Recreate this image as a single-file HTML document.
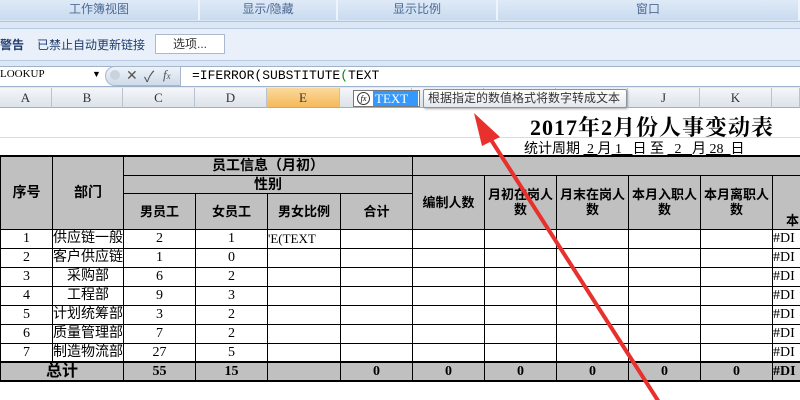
<!DOCTYPE html>
<html><head><meta charset="utf-8"><style>
*{margin:0;padding:0;box-sizing:border-box}
body{width:800px;height:400px;overflow:hidden;background:#fff;position:relative;font-family:"Liberation Sans","Noto Sans CJK SC",sans-serif;font-size:12px}
.a{position:absolute}
.tab{position:absolute;top:0;height:20px;background:linear-gradient(#dfeaf7,#c9dbf0);border-right:2px solid #eef4fb;color:#4d6a92;font-size:12px;text-align:center;line-height:18px}
.ch{position:absolute;top:88px;height:20px;background:linear-gradient(#f4f6f9,#dde3ea);border-right:1px solid #b9c3d0;border-bottom:1px solid #9eb0c6;text-align:center;line-height:20px;font-family:"Liberation Serif","Noto Serif CJK SC",serif;font-size:13px;color:#333}
table{position:absolute;left:0;top:155px;width:812px;border-collapse:collapse;table-layout:fixed;font-family:"Liberation Serif","Noto Sans CJK SC",serif;font-size:14px}
td{border:1px solid #000;text-align:center;padding:0;overflow:hidden;white-space:nowrap;height:19px;line-height:17px}
.g{background:#c0c0c0;font-weight:bold;font-family:"Liberation Sans","Noto Sans CJK SC",sans-serif;font-size:13px}
.t td{border-top:2px solid #000;border-bottom:2px solid #000;background:#c0c0c0;font-weight:bold;height:18px}
.gl{position:absolute;background:#d8dde3}
</style></head><body>
<div class="a" style="left:0;top:0;width:800px;height:66px;background:#dce7f5"></div>
<div class="tab" style="left:0;width:200px">工作簿视图</div>
<div class="tab" style="left:200px;width:138px">显示/隐藏</div>
<div class="tab" style="left:338px;width:160px">显示比例</div>
<div class="tab" style="left:498px;width:302px">窗口</div>
<div class="a" style="left:0;top:21px;width:800px;height:1px;background:#aec4e0"></div>
<div class="a" style="left:0;top:28px;width:800px;height:33px;background:#e9f0f9;border-top:1px solid #b8cbe3;border-bottom:1px solid #b8cbe3"></div>
<div class="a" style="left:0;top:36px;color:#1f3c6e;font-weight:bold;font-size:12px">警告</div>
<div class="a" style="left:37px;top:36px;color:#1f3c6e;font-size:12px">已禁止自动更新链接</div>
<div class="a" style="left:155px;top:34px;width:70px;height:20px;background:#fff;border:1px solid #a9b9cf;text-align:center;line-height:18px;font-size:12px;color:#333">选项...</div>
<div class="a" style="left:0;top:66px;width:800px;height:21px;background:#fff;border-top:1px solid #9eb2cc;border-bottom:1px solid #9eb2cc"></div>
<div class="a" style="left:0;top:68px;font-family:'Liberation Serif',serif;font-size:11px">LOOKUP</div>
<div class="a" style="left:92px;top:69px;font-size:9px">▼</div>
<div class="a" style="left:105px;top:66px;width:76px;height:20px;background:linear-gradient(#eef3f9,#cfdbe9);border-radius:10px 0 0 10px;border:1px solid #a8b8cc"></div>
<div class="a" style="left:110px;top:70px;width:10px;height:10px;border-radius:5px;background:#c9d3de"></div>
<div class="a" style="left:126px;top:67px;font-size:14px;color:#555">✕</div>
<div class="a" style="left:144px;top:66px;font-size:15px;color:#555">✓</div>
<div class="a" style="left:163px;top:67px;font-family:'Liberation Serif',serif;font-style:italic;font-size:13px;color:#555">f<span style="font-size:9px">x</span></div>
<div class="a" style="left:192px;top:68px;font-family:'Liberation Mono',monospace;font-size:13px;letter-spacing:0px">=IFERROR(SUBSTITUTE<span style="color:#080">(</span>TEXT</div>
<div class="a" style="left:0;top:87px;width:800px;height:21px;background:#e4e9ef"></div>
<div class="ch" style="left:0;width:52px">A</div>
<div class="ch" style="left:52px;width:71px">B</div>
<div class="ch" style="left:123px;width:72px">C</div>
<div class="ch" style="left:195px;width:72px">D</div>
<div class="ch" style="left:267px;width:73px;background:linear-gradient(#fbd99c,#f5b95a)">E</div>
<div class="ch" style="left:340px;width:72px"></div>
<div class="ch" style="left:412px;width:72px"></div>
<div class="ch" style="left:484px;width:72px"></div>
<div class="ch" style="left:556px;width:72px"></div>
<div class="ch" style="left:628px;width:72px">J</div>
<div class="ch" style="left:700px;width:72px">K</div>
<div class="ch" style="left:772px;width:28px"></div>
<div class="a" style="left:353px;top:90px;width:67px;height:17px;background:#fff;border:1px solid #777"></div>
<div class="a" style="left:357px;top:92px;width:13px;height:13px;border:1px solid #333;border-radius:7px;font-size:8px;text-align:center;line-height:11px;font-style:italic;font-family:'Liberation Serif',serif">fx</div>
<div class="a" style="left:373px;top:91px;width:45px;height:15px;background:#3399ff;color:#fff;font-family:'Liberation Serif',serif;font-size:13px;line-height:15px;padding-left:2px">TEXT</div>
<div class="a" style="left:423px;top:89px;width:204px;height:19px;background:linear-gradient(#fff,#e4e8ee);border:1px solid #8a95a3;border-radius:2px;font-size:12px;line-height:17px;padding-left:4px;color:#333;box-shadow:1px 1px 2px #aaa">根据指定的数值格式将数字转成文本</div>
<div class="gl" style="left:0;top:137px;width:800px;height:1px"></div>
<div class="a" style="left:530px;top:111px;font-family:'Liberation Serif','Noto Serif CJK SC',serif;font-weight:bold;font-size:22px;letter-spacing:1px">2017年2月份人事变动表</div>
<div class="a" style="left:524px;top:138px;font-family:'Liberation Serif','Noto Sans CJK SC',serif;font-size:14px;white-space:nowrap">统计周期 <u>&nbsp;2&nbsp;</u>月<u>&nbsp;1&nbsp;&nbsp;&nbsp;</u>日 至 <u>&nbsp;&nbsp;2&nbsp;&nbsp;&nbsp;</u>月<u>&nbsp;28&nbsp;&nbsp;</u>日</div>
<table>
<colgroup><col style="width:52px"><col style="width:71px"><col style="width:72px"><col style="width:72px"><col style="width:73px"><col style="width:72px"><col style="width:72px"><col style="width:72px"><col style="width:72px"><col style="width:72px"><col style="width:72px"><col style="width:40px"></colgroup>
<tr><td class="g" rowspan="3" style="border-top:2px solid #000;font-size:14px">序号</td><td class="g" rowspan="3" style="border-top:2px solid #000;font-size:14px">部门</td><td class="g" colspan="4" style="border-top:2px solid #000;height:19px;font-size:14px">员工信息（月初）</td><td class="g" colspan="6" style="border-top:2px solid #000"></td></tr>
<tr><td class="g" colspan="4" style="height:17px;font-size:14px">性别</td><td class="g" rowspan="2">编制人数</td><td class="g" rowspan="2" style="line-height:15px;white-space:normal">月初在岗人数</td><td class="g" rowspan="2" style="line-height:15px;white-space:normal">月末在岗人数</td><td class="g" rowspan="2" style="line-height:15px;white-space:normal">本月入职人数</td><td class="g" rowspan="2" style="line-height:15px;white-space:normal">本月离职人数</td><td class="g" rowspan="2" style="vertical-align:bottom">本</td></tr>
<tr><td class="g" style="height:36px">男员工</td><td class="g">女员工</td><td class="g">男女比例</td><td class="g">合计</td></tr>
<tr><td>1</td><td>供应链一般</td><td>2</td><td>1</td><td style="text-align:left;font-size:13px">'E(TEXT</td><td></td><td></td><td></td><td></td><td></td><td></td><td style="text-align:left">#DI</td></tr>
<tr><td>2</td><td>客户供应链</td><td>1</td><td>0</td><td></td><td></td><td></td><td></td><td></td><td></td><td></td><td style="text-align:left">#DI</td></tr>
<tr><td>3</td><td>采购部</td><td>6</td><td>2</td><td></td><td></td><td></td><td></td><td></td><td></td><td></td><td style="text-align:left">#DI</td></tr>
<tr><td>4</td><td>工程部</td><td>9</td><td>3</td><td></td><td></td><td></td><td></td><td></td><td></td><td></td><td style="text-align:left">#DI</td></tr>
<tr><td>5</td><td>计划统筹部</td><td>3</td><td>2</td><td></td><td></td><td></td><td></td><td></td><td></td><td></td><td style="text-align:left">#DI</td></tr>
<tr><td>6</td><td>质量管理部</td><td>7</td><td>2</td><td></td><td></td><td></td><td></td><td></td><td></td><td></td><td style="text-align:left">#DI</td></tr>
<tr><td>7</td><td>制造物流部</td><td>27</td><td>5</td><td></td><td></td><td></td><td></td><td></td><td></td><td></td><td style="text-align:left">#DI</td></tr>
<tr class="t"><td colspan="2" style="font-size:16px">总计</td><td>55</td><td>15</td><td></td><td>0</td><td>0</td><td>0</td><td>0</td><td>0</td><td>0</td><td style="text-align:left">#DI</td></tr>
</table>
<svg class="a" style="left:0;top:0" width="800" height="400"><line x1="486" y1="132" x2="664" y2="410" stroke="#e8302c" stroke-width="4"/><polygon points="474,113 500,137 482,146" fill="#e8302c"/></svg>
</body></html>
